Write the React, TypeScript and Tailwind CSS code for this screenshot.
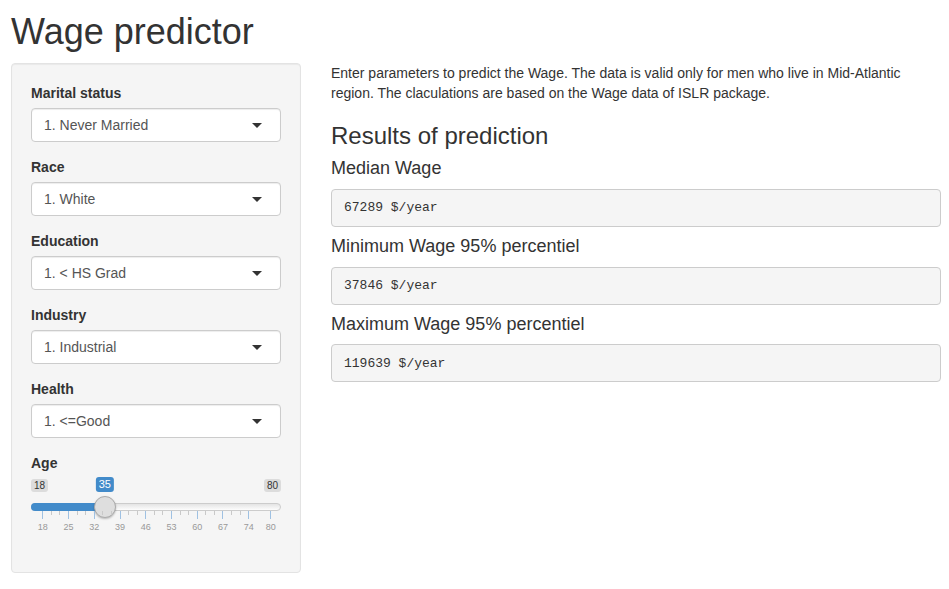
import React from "react";

const font = "font-['Liberation_Sans',Arial,sans-serif]";

function SelectBox({ label, value }: { label: string; value: string }) {
  return (
    <div className="mb-[15px]">
      <label className="block mb-[5px] text-[14px] leading-[20px] font-bold text-[#333]">{label}</label>
      <div className="flex items-center justify-between h-[34px] bg-white border border-[#ccc] rounded-[4px] shadow-[inset_0_1px_1px_rgba(0,0,0,0.075)] pl-[12px] pr-[18px] pt-px">
        <span className="text-[14px] text-[#555]">{value}</span>
        <span className="w-0 h-0 border-l-[5px] border-r-[5px] border-t-[5px] border-l-transparent border-r-transparent border-t-[#333]" />
      </div>
    </div>
  );
}

function AgeSlider() {
  const min = 18;
  const max = 80;
  const value = 35;
  // grid spans from x0 to x1 inside the 250px slider
  const x0 = 11.3;
  const x1 = 239.3;
  const pos = (v: number) => x0 + ((v - min) / (max - min)) * (x1 - x0);
  const majors = [18, 25, 32, 39, 46, 53, 60, 67, 74, 80];
  const minors: number[] = [];
  for (let v = 18; v < 74; v += 7) {
    minors.push(v + 7 / 3, v + 14 / 3);
  }
  const handle = pos(value);

  return (
    <div className="relative h-[65px] pt-[6px]">
      {/* min / max labels */}
      <div className="flex justify-between">
        <span className="px-[3px] py-[1px] text-[10px] leading-[11px] text-[#333] bg-[#dcdcdc] rounded-[3px]">18</span>
        <span className="px-[3px] py-[1px] text-[10px] leading-[11px] text-[#333] bg-[#dcdcdc] rounded-[3px]">80</span>
      </div>
      <span
        className="absolute top-[4px] px-[3px] py-[1px] text-[11px] leading-[13px] text-white bg-[#428bca] rounded-[3px] -translate-x-1/2"
        style={{ left: handle }}
      >
        35
      </span>

      {/* track */}
      <div className="relative mt-[11px] h-[8px] rounded-full border border-[#ccc] bg-gradient-to-b from-[#e4e4e4] to-[#fdfdfd]">
        <div className="absolute -left-px -top-px h-[8px] rounded-l-full bg-[#428bca]" style={{ width: handle }} />
        <div
          className="absolute -top-[8px] w-[22px] h-[22px] rounded-full bg-[#dedede] border border-[#ababab] shadow-[0_1px_2px_rgba(0,0,0,0.25)] -translate-x-1/2"
          style={{ left: handle - 1 }}
        />
      </div>

      {/* grid */}
      <div className="relative h-[20px]">
        {minors.map((v) => (
          <span key={v} className="absolute top-0 w-px h-[4px] bg-[#c9c9c9]" style={{ left: pos(v) }} />
        ))}
        {majors.map((v) => (
          <React.Fragment key={v}>
            <span className="absolute top-0 w-px h-[8px] bg-[#9fc1e2]" style={{ left: pos(v) }} />
            <span
              className="absolute top-[10px] text-[9px] leading-[12px] text-[#999] -translate-x-1/2"
              style={{ left: pos(v) + 0.5 }}
            >
              {v}
            </span>
          </React.Fragment>
        ))}
      </div>
    </div>
  );
}

function Output({ title, value }: { title: string; value: string }) {
  return (
    <>
      <h4 className="mt-[10px] mb-[10px] text-[18px] leading-[1.1] text-[#333]">{title}</h4>
      <pre className="mb-[10px] px-[12px] py-[9.5px] bg-[#f5f5f5] border border-[#ccc] rounded-[4px] text-[13px] leading-[17px] text-[#333] font-['Liberation_Mono','Courier_New',monospace]">
        {value}
      </pre>
    </>
  );
}

export default function App() {
  return (
    <div className={`${font} bg-white min-h-[589px] pl-[11px] pr-[8px] text-[#333]`}>
      <h2 className="pt-[12px] mb-[11px] text-[36px] leading-[1.1] text-[#333]">Wage predictor</h2>
      <div className="flex gap-[30px] items-start">
        <div className="w-[290px] shrink-0 bg-[#f5f5f5] border border-[#e3e3e3] rounded-[4px] p-[19px] shadow-[inset_0_1px_1px_rgba(0,0,0,0.05)]">
          <SelectBox label="Marital status" value="1. Never Married" />
          <SelectBox label="Race" value="1. White" />
          <SelectBox label="Education" value="1. < HS Grad" />
          <SelectBox label="Industry" value="1. Industrial" />
          <SelectBox label="Health" value="1. <=Good" />
          <div className="mb-[15px]">
            <label className="block text-[14px] leading-[20px] font-bold text-[#333]">Age</label>
            <AgeSlider />
          </div>
        </div>
        <div className="flex-1 min-w-0">
          <p className="mb-[10px] text-[14px] leading-[20px] text-[#333]">
            Enter parameters to predict the Wage. The data is valid only for men who live in Mid-Atlantic region. The claculations are based on the Wage data of ISLR package.
          </p>
          <h3 className="mt-[20px] mb-[9px] text-[24px] leading-[1.1] text-[#333]">Results of prediction</h3>
          <Output title="Median Wage" value="67289 $/year" />
          <Output title="Minimum Wage 95% percentiel" value="37846 $/year" />
          <Output title="Maximum Wage 95% percentiel" value="119639 $/year" />
        </div>
      </div>
    </div>
  );
}
